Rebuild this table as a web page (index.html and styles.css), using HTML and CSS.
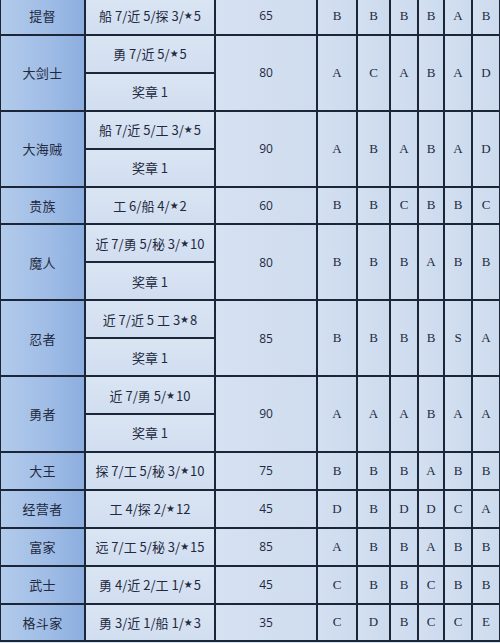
FILE: index.html
```html
<!DOCTYPE html>
<html lang="zh">
<head>
<meta charset="utf-8">
<link rel="stylesheet" href="styles.css">
</head>
<body>
<div class="sheet">
  <div class="name s1">提督</div>
  <div class="req">船 7/近 5/探 3/<span class="star">★</span>5</div>
  <div class="num s1">65</div>
  <div class="g s1">B</div><div class="g s1">B</div><div class="g s1">B</div><div class="g s1">B</div><div class="g s1">A</div><div class="g s1">B</div>

  <div class="name s2">大剑士</div>
  <div class="req">勇 7/近 5/<span class="star">★</span>5</div>
  <div class="num s2">80</div>
  <div class="g s2">A</div><div class="g s2">C</div><div class="g s2">A</div><div class="g s2">B</div><div class="g s2">A</div><div class="g s2">D</div>
  <div class="req">奖章 1</div>

  <div class="name s2">大海贼</div>
  <div class="req">船 7/近 5/工 3/<span class="star">★</span>5</div>
  <div class="num s2">90</div>
  <div class="g s2">A</div><div class="g s2">B</div><div class="g s2">A</div><div class="g s2">B</div><div class="g s2">A</div><div class="g s2">D</div>
  <div class="req">奖章 1</div>

  <div class="name s1">贵族</div>
  <div class="req">工 6/船 4/<span class="star">★</span>2</div>
  <div class="num s1">60</div>
  <div class="g s1">B</div><div class="g s1">B</div><div class="g s1">C</div><div class="g s1">B</div><div class="g s1">B</div><div class="g s1">C</div>

  <div class="name s2">魔人</div>
  <div class="req">近 7/勇 5/秘 3/<span class="star">★</span>10</div>
  <div class="num s2">80</div>
  <div class="g s2">B</div><div class="g s2">B</div><div class="g s2">B</div><div class="g s2">A</div><div class="g s2">B</div><div class="g s2">B</div>
  <div class="req">奖章 1</div>

  <div class="name s2">忍者</div>
  <div class="req">近 7/近 5 工 3<span class="star">★</span>8</div>
  <div class="num s2">85</div>
  <div class="g s2">B</div><div class="g s2">B</div><div class="g s2">B</div><div class="g s2">B</div><div class="g s2">S</div><div class="g s2">A</div>
  <div class="req">奖章 1</div>

  <div class="name s2">勇者</div>
  <div class="req">近 7/勇 5/<span class="star">★</span>10</div>
  <div class="num s2">90</div>
  <div class="g s2">A</div><div class="g s2">A</div><div class="g s2">A</div><div class="g s2">B</div><div class="g s2">A</div><div class="g s2">A</div>
  <div class="req">奖章 1</div>

  <div class="name s1">大王</div>
  <div class="req">探 7/工 5/秘 3/<span class="star">★</span>10</div>
  <div class="num s1">75</div>
  <div class="g s1">B</div><div class="g s1">B</div><div class="g s1">B</div><div class="g s1">A</div><div class="g s1">B</div><div class="g s1">B</div>

  <div class="name s1">经营者</div>
  <div class="req">工 4/探 2/<span class="star">★</span>12</div>
  <div class="num s1">45</div>
  <div class="g s1">D</div><div class="g s1">B</div><div class="g s1">D</div><div class="g s1">D</div><div class="g s1">C</div><div class="g s1">A</div>

  <div class="name s1">富家</div>
  <div class="req">远 7/工 5/秘 3/<span class="star">★</span>15</div>
  <div class="num s1">85</div>
  <div class="g s1">A</div><div class="g s1">B</div><div class="g s1">B</div><div class="g s1">A</div><div class="g s1">B</div><div class="g s1">B</div>

  <div class="name s1">武士</div>
  <div class="req">勇 4/近 2/工 1/<span class="star">★</span>5</div>
  <div class="num s1">45</div>
  <div class="g s1">C</div><div class="g s1">B</div><div class="g s1">B</div><div class="g s1">C</div><div class="g s1">B</div><div class="g s1">B</div>

  <div class="name s1">格斗家</div>
  <div class="req">勇 3/近 1/船 1/<span class="star">★</span>3</div>
  <div class="num s1">35</div>
  <div class="g s1">C</div><div class="g s1">D</div><div class="g s1">B</div><div class="g s1">C</div><div class="g s1">C</div><div class="g s1">E</div>
</div>
</body>
</html>
```
FILE: styles.css
```css
html, body {
  margin: 0;
  padding: 0;
  background: #d4e1f1;
  overflow: hidden;
}

.sheet {
  display: grid;
  grid-template-columns: 83px 128px 100px 38px 31px 26px 24px 26px 26px;
  grid-auto-rows: 35.92px;
  gap: 2px;
  padding: 2px;
  width: 498px;
  margin: -4px 0 0 -1px;
  background: #1b2638;
  color: #1f2a40;
  font-family: "Noto Sans CJK SC", "Noto Sans", sans-serif;
  font-size: 13px;
}

.sheet > div {
  display: flex;
  align-items: center;
  justify-content: center;
  white-space: nowrap;
}

.s1 { grid-row: span 1; }
.s2 { grid-row: span 2; }

.name {
  grid-column: 1;
  background: linear-gradient(to right, #b2cbeb 0%, #a0bde6 55%, #8caedf 100%);
  font-size: 13px;
  letter-spacing: 0.3px;
}

.req {
  grid-column: 2;
  background: linear-gradient(to bottom, #dae5f3, #d1def0);
  font-size: 13px;
}

.star {
  font-family: "DejaVu Sans", sans-serif;
  font-size: 10px;
  margin-right: 1px;
}

.num {
  grid-column: 3;
  background: linear-gradient(to right, #d6e2f2, #cfdcef);
  font-family: "Open Sans", "Noto Sans", sans-serif;
  font-size: 12px;
}

.g {
  background: linear-gradient(to right, #d3e0f1, #ccdaee);
  font-family: "Liberation Serif", serif;
  font-size: 13px;
}
```
